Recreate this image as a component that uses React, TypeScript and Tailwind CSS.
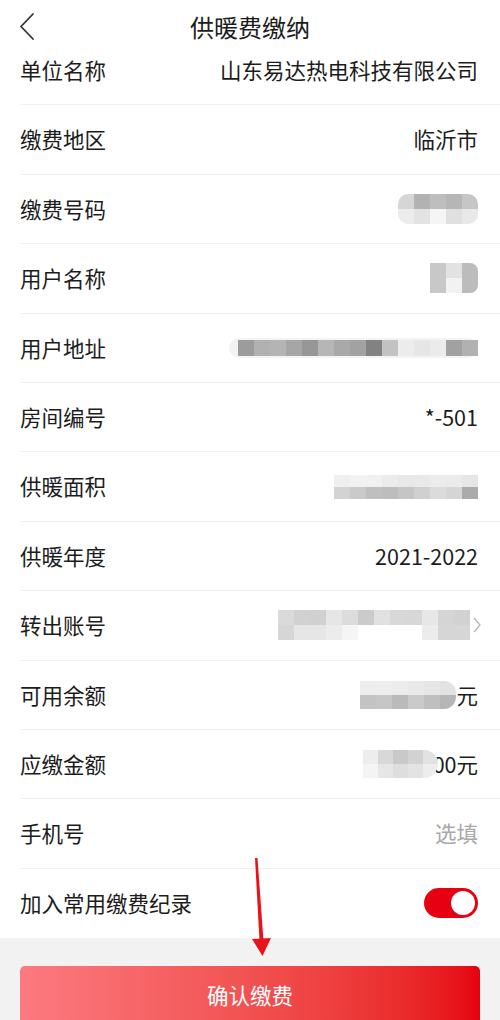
import React from 'react'

const font = { fontFamily: '"Noto Sans CJK SC", "Noto Sans", sans-serif' }

// pixelated mosaic blocks (the blurred values in the screenshot)
function Mosaic({ rows, cell = 16, rowH = 15, className = '' }: { rows: string[][]; cell?: number; rowH?: number; className?: string }) {
  return (
    <div className={`flex flex-col overflow-hidden ${className}`}>
      {rows.map((row, i) => (
        <div key={i} className="flex">
          {row.map((c, j) => (
            <div key={j} style={{ width: cell, height: rowH, background: c }} />
          ))}
        </div>
      ))}
    </div>
  )
}

function Row({ label, children, last }: { label: string; children?: React.ReactNode; last?: boolean }) {
  return (
    <div className={`ml-5 flex h-[69.4px] items-center justify-between pr-[22px] ${last ? '' : 'border-b border-[#f1f1f1]'}`}>
      <span className="text-[21.5px] text-[#1c1c1c]">{label}</span>
      <div className="flex items-center text-[21.5px] text-[#1c1c1c]">{children}</div>
    </div>
  )
}

export default function App() {
  return (
    <div className="relative w-[500px] h-[1020px] overflow-hidden bg-[#f2f2f2]" style={font}>
      <div className="bg-white">
        {/* header */}
        <div className="grid h-9 grid-cols-[1fr_auto_1fr] items-start">
          <svg width="16" height="30" viewBox="0 0 16 30" className="ml-[19px] mt-[12px]">
            <path d="M14 2 L2 14.5 L14 27" fill="none" stroke="#333" strokeWidth="1.8" strokeLinecap="round" strokeLinejoin="round" />
          </svg>
          <span className="mt-[12px] text-[24px] leading-[30px] text-[#1c1c1c]">供暖费缴纳</span>
          <span />
        </div>

        <Row label="单位名称">山东易达热电科技有限公司</Row>
        <Row label="缴费地区">临沂市</Row>
        <Row label="缴费号码">
          <Mosaic
            className="rounded-[10px]"
            rows={[
              ['#d6d6d6', '#b2b2b2', '#bebebe', '#b6b6b6', '#c6c6c6'],
              ['#ececec', '#e3e3e3', '#f5f5f5', '#e0e0e0', '#e8e8e8'],
            ]}
          />
        </Row>
        <Row label="用户名称">
          <Mosaic
            className="rounded-r-[8px]"
            rows={[
              ['#c8c8c8', '#e2e2e2', '#bcbcbc'],
              ['#c8c8c8', '#f2f2f2', '#bcbcbc'],
            ]}
          />
        </Row>
        <Row label="用户地址">
          <div className="flex items-center rounded-full bg-[#f3f3f3] py-[2px] pl-[9px]">
            <Mosaic
              rowH={16}
              rows={[
                ['#9c9c9c', '#b1b1b1', '#b4b4b4', '#a6a6a6', '#979797', '#b6b6b6', '#a9a9a9', '#a2a2a2', '#828282', '#c2c2c2', '#ececec', '#e6e6e6', '#ebebeb', '#a1a1a1', '#b1b1b1'],
              ]}
            />
          </div>
        </Row>
        <Row label="房间编号">*-501</Row>
        <Row label="供暖面积">
          <Mosaic
            rowH={12}
            rows={[
              ['#efefef', '#f2f2f2', '#f1f1f1', '#ebebeb', '#e8e8e8', '#e9e9e9', '#ececec', '#ebebeb', '#e6e6e6'],
              ['#d3d3d3', '#cacaca', '#bfbfbf', '#bdbdbd', '#c5c5c5', '#d0d0d0', '#dbdbdb', '#d5d5d5', '#ababab'],
            ]}
          />
        </Row>
        <Row label="供暖年度">2021-2022</Row>
        <Row label="转出账号">
          <Mosaic
            rowH={15}
            rows={[
              ['#dadada', '#d1d1d1', '#d0d0d0', '#e6e6e6', '#dcdcdc', '#cbcbcb', '#e1e1e1', '#d8d8d8', '#d7d7d7', '#e7e7e7', '#d5d5d5', '#d2d2d2'],
              ['#d6d6d6', '#e6e6e6', '#e6e6e6', '#ececec', '#f5f5f5', '#ffffff', '#ffffff', '#ffffff', '#ffffff', '#ececec', '#d6d6d6', '#d6d6d6'],
            ]}
          />
          <svg width="10" height="18" viewBox="0 0 10 18" className="-mr-[4px] ml-[2px]">
            <path d="M2 2 L8 9 L2 16" fill="none" stroke="#b5b5b5" strokeWidth="1.3" />
          </svg>
        </Row>
        <Row label="可用余额">
          <Mosaic
            className="rounded-r-[12px]"
            rowH={14}
            rows={[
              ['#ededed', '#eeeeee', '#ececec', '#e9e9e9', '#e6e6e6', '#e3e3e3'],
              ['#c3c3c3', '#c6c6c6', '#bababa', '#cacaca', '#bfbfbf', '#b6b6b6'],
            ]}
          />
          <span>元</span>
        </Row>
        <Row label="应缴金额">
          <div className="relative flex items-center">
            <span className="ml-[70px]">00元</span>
            <Mosaic
              className="absolute left-0 top-1/2 -translate-y-1/2 rounded-r-[14px]"
              cell={15}
              rowH={14}
              rows={[
                ['#ededed', '#d8d8d8', '#c9c9c9', '#d2d2d2', '#e2e2e2'],
                ['#f4f4f4', '#e6e6e6', '#dedede', '#e3e3e3', '#ededed'],
              ]}
            />
          </div>
        </Row>
        <Row label="手机号">
          <span className="text-[#a8a8a8]">选填</span>
        </Row>
        <Row label="加入常用缴费纪录" last>
          <div className="flex h-[30px] w-[54px] items-center justify-end rounded-full bg-[#e60012] pr-[3px]">
            <div className="h-[24px] w-[24px] rounded-full bg-white" />
          </div>
        </Row>
      </div>

      <div className="px-5 pt-[28px]">
        <button className="flex h-[70px] w-full items-start justify-center rounded-[5px] bg-gradient-to-r from-[#fc7a80] to-[#e5000f] pt-[13px] text-[21.5px] text-white">
          确认缴费
        </button>
      </div>

      {/* red annotation arrow */}
      <svg className="absolute left-[244px] top-[855px]" width="30" height="105" viewBox="0 0 30 105">
        <polygon points="11,3 13.5,3 19.5,86 15.5,86" fill="#e8141c" />
        <polygon points="8,84 27,83 18.5,101" fill="#e8141c" />
      </svg>
    </div>
  )
}
